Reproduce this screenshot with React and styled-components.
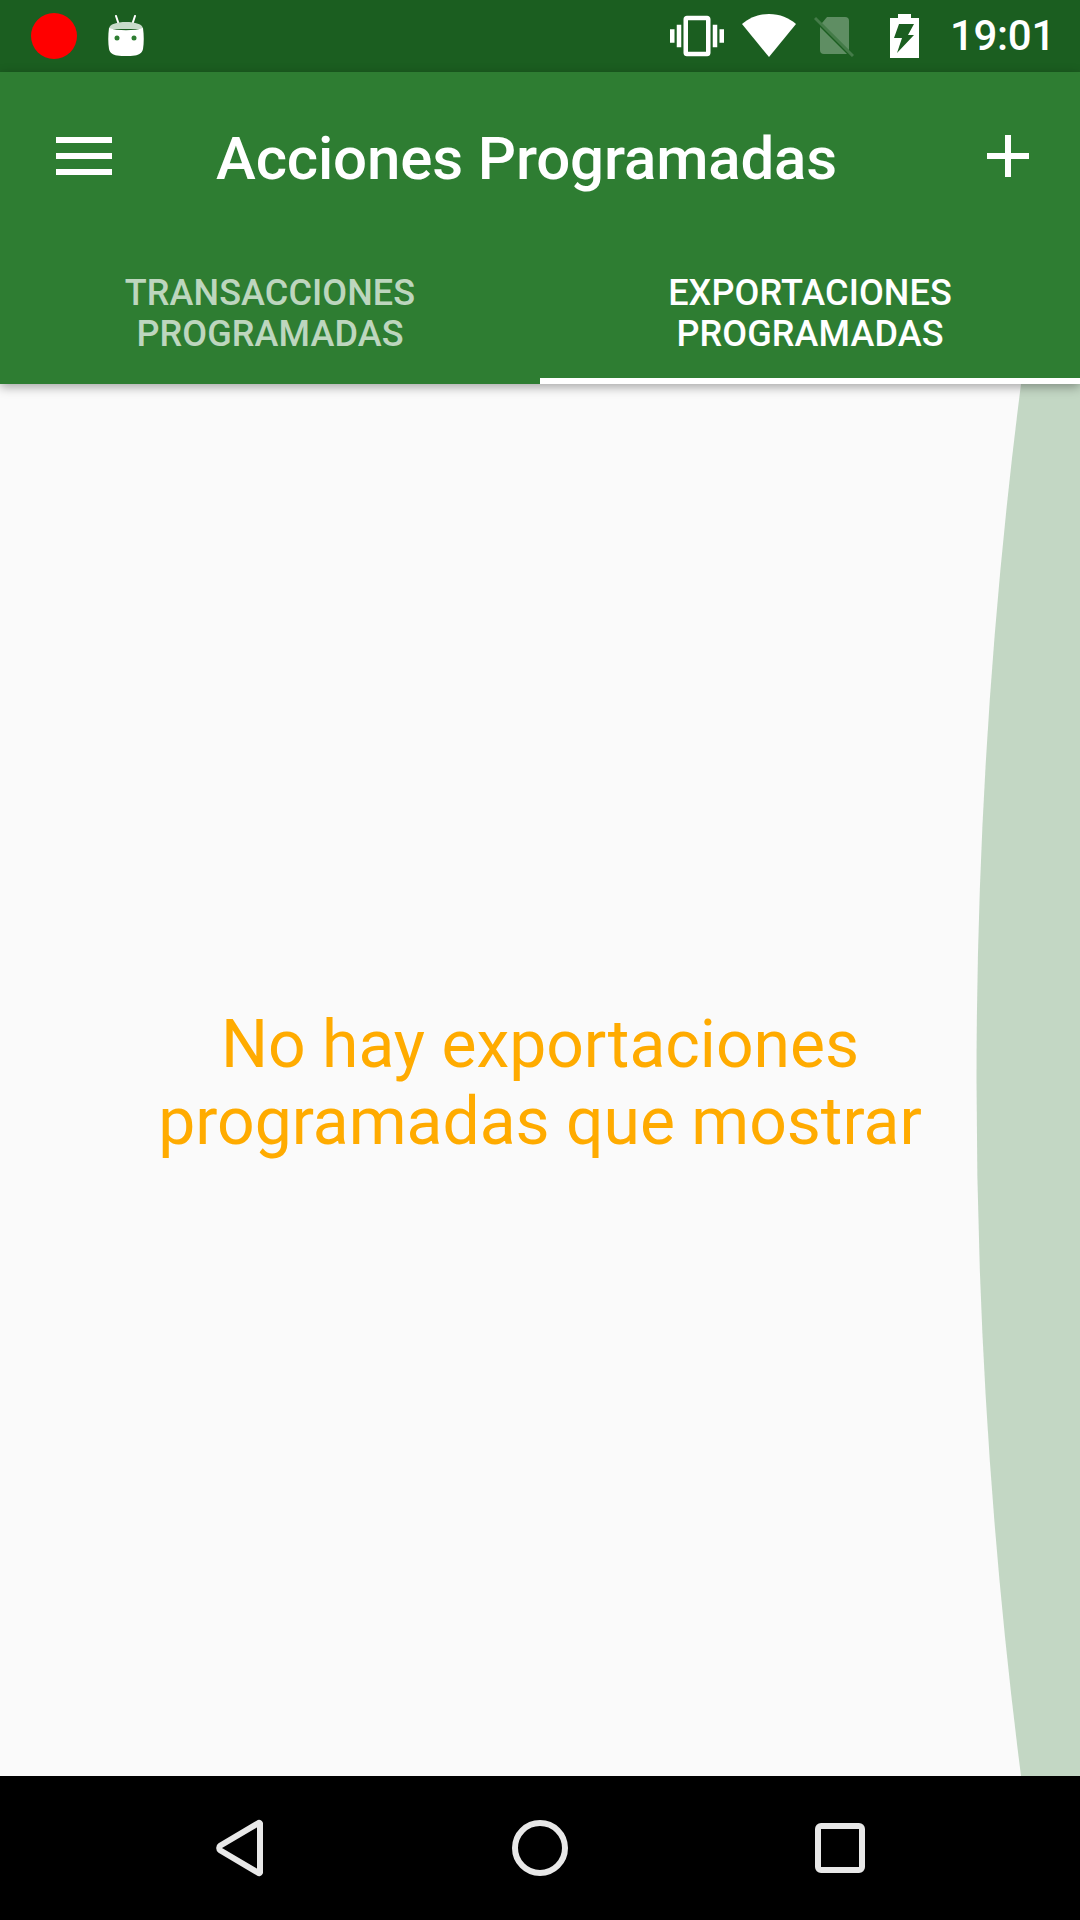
import React from "react";
import styled, { createGlobalStyle } from "styled-components";

const Global = createGlobalStyle`
  html, body { margin: 0; padding: 0; background: #000; }
  * { box-sizing: border-box; }
`;

const Screen = styled.div`
  width: 1080px;
  height: 1920px;
  display: flex;
  flex-direction: column;
  font-family: Roboto, "Liberation Sans", sans-serif;
  overflow: hidden;
`;

const StatusBar = styled.div`
  height: 72px;
  flex: none;
  background: #1b5e20;
  display: flex;
  align-items: center;
  justify-content: space-between;
  padding: 0 25px 0 31px;
`;

const StatusGroup = styled.div`
  display: flex;
  align-items: center;
  gap: ${(p) => p.$gap}px;
`;

const RecordDot = styled.div`
  width: 46px;
  height: 46px;
  border-radius: 50%;
  background: #ff0000;
`;

const Clock = styled.span`
  font-size: 42px;
  font-weight: 500;
  letter-spacing: -0.3px;
  line-height: 72px;
  color: #fff;
`;

const AppBar = styled.header`
  flex: none;
  height: 312px;
  background: #2e7d32;
  display: flex;
  flex-direction: column;
  position: relative;
  z-index: 2;
  box-shadow: 0 3px 10px rgba(0, 0, 0, 0.35);
`;

const Toolbar = styled.div`
  height: 168px;
  flex: none;
  display: flex;
  align-items: center;
  padding: 0 51px 0 56px;
`;

const Title = styled.h1`
  flex: 1;
  margin: 5px 0 0 104px;
  font-size: 60px;
  font-weight: 500;
  letter-spacing: -0.15px;
  line-height: 84px;
  color: #fff;
`;

const Tabs = styled.nav`
  flex: 1;
  display: flex;
`;

const Tab = styled.div`
  flex: 1;
  display: flex;
  align-items: center;
  justify-content: center;
  text-align: center;
  text-transform: uppercase;
  font-size: 36px;
  font-weight: 500;
  letter-spacing: 0.1px;
  line-height: 41px;
  padding-top: 9px;
  color: ${(p) => (p.$active ? "#fff" : "rgba(255,255,255,0.7)")};
  border-bottom: 6px solid ${(p) => (p.$active ? "#fff" : "transparent")};
`;

const Content = styled.main`
  flex: 1;
  position: relative;
  background: #fafafa;
  display: flex;
  align-items: center;
  justify-content: center;
`;

const EmptyMessage = styled.p`
  margin: 6px 0 0;
  width: 800px;
  text-align: center;
  font-size: 66px;
  line-height: 77px;
  color: #ffab00;
`;

const Glow = styled.svg`
  position: absolute;
  right: 0;
  top: 0;
  width: 110px;
  height: 100%;
`;

const NavBar = styled.footer`
  flex: none;
  height: 144px;
  background: #000;
  display: grid;
  grid-template-columns: 1fr 1fr 1fr;
  align-items: center;
  justify-items: center;
  padding: 0 90px;
`;

const Icon = styled.svg`
  display: block;
  flex: none;
`;

const Vibrate = () => (
  <Icon width="54" height="54" viewBox="0 0 24 24" fill="#fff">
    <path d="M0 15h2V9H0v6zm3 2h2V7H3v10zm19-8v6h2V9h-2zm-3 8h2V7h-2v10zM16.5 3h-9C6.67 3 6 3.67 6 4.5v15c0 .83.67 1.5 1.5 1.5h9c.83 0 1.5-.67 1.5-1.5v-15c0-.83-.67-1.5-1.5-1.500zM16 19H8V5h8v14z" />
  </Icon>
);

const Wifi = () => (
  <Icon width="54" height="44" viewBox="0 0 54 44" fill="#fff">
    <path d="M0 10C7 4 16 0 27 0s20 4 27 10L27 43z" />
  </Icon>
);

const SimOff = () => (
  <Icon width="40" height="42" viewBox="0 0 40 42">
    <path d="M13 2H31a4 4 0 0 1 4 4V35L8 8Z" fill="#fff" fillOpacity="0.3" />
    <path d="M6 12L33 39H10a4 4 0 0 1-4-4Z" fill="#fff" fillOpacity="0.3" />
    <path d="M1 3L39 41" stroke="#fff" strokeOpacity="0.18" strokeWidth="3" fill="none" />
  </Icon>
);

const Battery = () => (
  <Icon width="29" height="44" viewBox="0 0 29 44">
    <path
      fill="#fff"
      fillRule="evenodd"
      d="M8 0h13v4h8v40H0V4h8z M9 10h15l-6 11h6L7 39l5-15H4z"
    />
  </Icon>
);

const AndroidHead = () => (
  <Icon width="36" height="42" viewBox="0 0 36 42">
    <path d="M8 1l3 9M27 1l-3 9" stroke="#fff" strokeWidth="2" strokeLinecap="round" />
    <path d="M1 14C1 9 9 7 18 7s17 2 17 7z" fill="#c9dccb" />
    <path d="M1 13c8 3 26 3 34 0 1 7 1 15 0 21-1 4-4 6-8 6.500-6 .7-12 .7-18 0-4-.5-7-2.500-8-6.500-1-6-1-14 0-21z" fill="#fff" />
    <circle cx="9" cy="23" r="2.500" fill="#2e7d32" />
    <circle cx="26" cy="23" r="2.500" fill="#2e7d32" />
  </Icon>
);

const Menu = () => (
  <Icon width="56" height="38" viewBox="0 0 56 38" fill="#fff">
    <rect y="0" width="56" height="6" />
    <rect y="16" width="56" height="6" />
    <rect y="32" width="56" height="6" />
  </Icon>
);

const Plus = () => (
  <Icon width="42" height="42" viewBox="0 0 42 42" fill="#fff">
    <path d="M18 0h6v18h18v6H24v18h-6V24H0v-6h18z" />
  </Icon>
);

const Back = () => (
  <Icon width="48" height="58" viewBox="0 0 48 58">
    <path
      d="M44 4.500V53.500a1 1 0 0 1-1.500.5L4.500 31.500a3 3 0 0 1 0-5L42.500 4a1 1 0 0 1 1.500.5z"
      fill="none"
      stroke="#e8e8e8"
      strokeWidth="6"
      strokeLinejoin="round"
    />
  </Icon>
);

const Home = () => (
  <Icon width="56" height="56" viewBox="0 0 56 56">
    <circle cx="28" cy="28" r="25" fill="none" stroke="#e8e8e8" strokeWidth="6" />
  </Icon>
);

const Recents = () => (
  <Icon width="50" height="50" viewBox="0 0 50 50">
    <rect x="3" y="3" width="44" height="44" rx="3" fill="none" stroke="#e8e8e8" strokeWidth="6" />
  </Icon>
);

export default function App() {
  return (
    <Screen>
      <Global />
      <StatusBar>
        <StatusGroup $gap={31}>
          <RecordDot />
          <AndroidHead />
        </StatusGroup>
        <StatusGroup $gap={36}>
          <StatusGroup $gap={18}>
            <Vibrate />
            <Wifi />
            <SimOff />
          </StatusGroup>
          <StatusGroup $gap={31}>
            <Battery />
            <Clock>19:01</Clock>
          </StatusGroup>
        </StatusGroup>
      </StatusBar>
      <AppBar>
        <Toolbar>
          <Menu />
          <Title>Acciones Programadas</Title>
          <Plus />
        </Toolbar>
        <Tabs>
          <Tab>Transacciones Programadas</Tab>
          <Tab $active>Exportaciones Programadas</Tab>
        </Tabs>
      </AppBar>
      <Content>
        <EmptyMessage>No hay exportaciones programadas que mostrar</EmptyMessage>
        <Glow viewBox="0 0 110 1392" preserveAspectRatio="none">
          <path d="M110 0H51Q-38 696 51 1392H110Z" fill="#c3d7c4" />
        </Glow>
      </Content>
      <NavBar>
        <Back />
        <Home />
        <Recents />
      </NavBar>
    </Screen>
  );
}
